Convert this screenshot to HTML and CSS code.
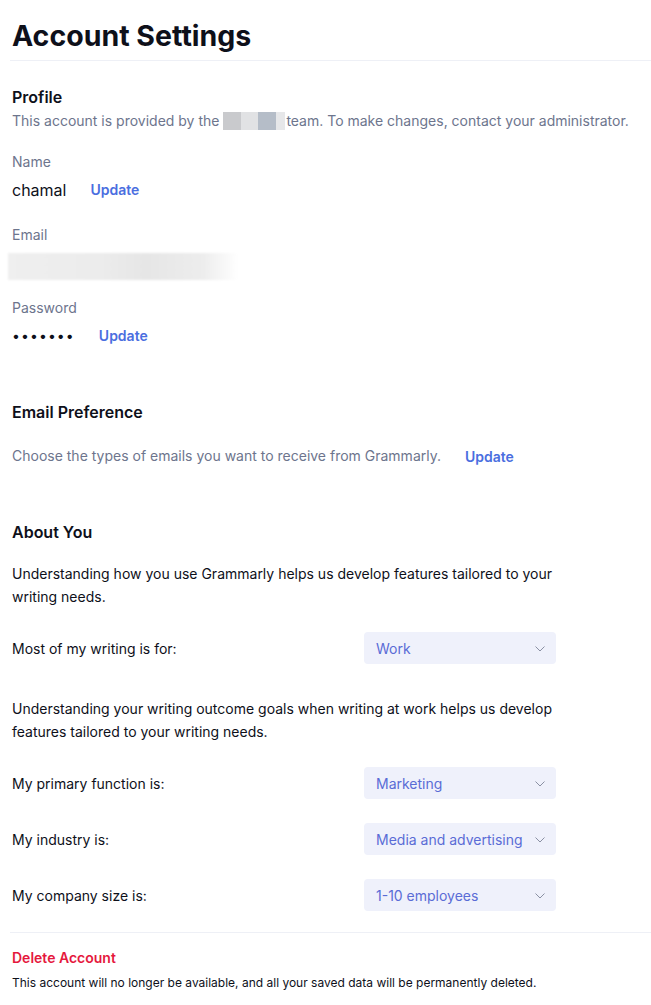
FILE: index.html
```html
<!DOCTYPE html>
<html lang="en">
<head>
  <meta charset="UTF-8">
  <meta name="viewport" content="width=device-width, initial-scale=1.0">
  <title>Account Settings</title>
  <link rel="stylesheet" href="styles.css">
</head>
<body>
  <div class="page">
    <h1 class="page-title">Account Settings</h1>
    <hr class="divider">

    <!-- Profile -->
    <section class="profile">
      <h2 class="section-title">Profile</h2>
      <p class="hint">This account is provided by the <span class="redacted"><i class="r1"></i><i class="r2"></i><i class="r3"></i><i class="r4"></i></span>team. To make changes, contact your administrator.</p>

      <div class="field">
        <div class="field-label">Name</div>
        <div class="field-value">
          <span>chamal</span>
          <a href="#" class="link">Update</a>
        </div>
      </div>

      <div class="field">
        <div class="field-label">Email</div>
        <div class="email-blur"></div>
      </div>

      <div class="field">
        <div class="field-label">Password</div>
        <div class="field-value">
          <span class="dots">•••••••</span>
          <a href="#" class="link">Update</a>
        </div>
      </div>
    </section>

    <!-- Email preference -->
    <section class="pref">
      <h2 class="section-title">Email Preference</h2>
      <div class="pref-row">
        <span class="hint">Choose the types of emails you want to receive from Grammarly.</span>
        <a href="#" class="link">Update</a>
      </div>
    </section>

    <!-- About you -->
    <section class="about">
      <h2 class="section-title">About You</h2>
      <p class="about-text">Understanding how you use Grammarly helps us develop features tailored to your writing needs.</p>

      <div class="select-row first">
        <span>Most of my writing is for:</span>
        <div class="select"><span>Work</span><svg width="10" height="6" viewBox="0 0 10 6"><path d="M0.5 0.5L5 5L9.5 0.5" fill="none" stroke="#8a90a3" stroke-width="1"/></svg></div>
      </div>

      <p class="about-text second">Understanding your writing outcome goals when writing at work helps us develop features tailored to your writing needs.</p>

      <div class="select-row first">
        <span>My primary function is:</span>
        <div class="select"><span>Marketing</span><svg width="10" height="6" viewBox="0 0 10 6"><path d="M0.5 0.5L5 5L9.5 0.5" fill="none" stroke="#8a90a3" stroke-width="1"/></svg></div>
      </div>
      <div class="select-row">
        <span>My industry is:</span>
        <div class="select"><span>Media and advertising</span><svg width="10" height="6" viewBox="0 0 10 6"><path d="M0.5 0.5L5 5L9.5 0.5" fill="none" stroke="#8a90a3" stroke-width="1"/></svg></div>
      </div>
      <div class="select-row">
        <span>My company size is:</span>
        <div class="select"><span>1-10 employees</span><svg width="10" height="6" viewBox="0 0 10 6"><path d="M0.5 0.5L5 5L9.5 0.5" fill="none" stroke="#8a90a3" stroke-width="1"/></svg></div>
      </div>
    </section>

    <hr class="divider bottom">

    <section class="danger">
      <a href="#" class="danger-link">Delete Account</a>
      <p class="danger-text">This account will no longer be available, and all your saved data will be permanently deleted.</p>
    </section>
  </div>
</body>
</html>
```

FILE: styles.css
```css
* {
  margin: 0;
  padding: 0;
  box-sizing: border-box;
}

body {
  font-family: 'Inter', 'Liberation Sans', sans-serif;
  background: #ffffff;
  color: #0e101a;
}

.page {
  padding: 18px 0 0 12px;
}

.page-title {
  font-size: 28.5px;
  line-height: 36px;
  font-weight: 700;
}

.divider {
  border: none;
  border-top: 1px solid #eef0f6;
  margin: 6px 0 0 -2px;
}

.section-title {
  font-size: 16px;
  line-height: 24px;
  font-weight: 600;
}

.hint {
  font-size: 14px;
  line-height: 20px;
  color: #6d758d;
}

.link {
  font-size: 14px;
  font-weight: 600;
  color: #4a6ee0;
  text-decoration: none;
}

/* Profile */
.profile {
  margin-top: 24px;
}

.profile .hint {
  margin-top: 2px;
}

.redacted {
  display: inline-flex;
  vertical-align: -4px;
  height: 18px;
  margin-right: 1px;
}

.redacted i {
  display: block;
  height: 18px;
}

.r1 { width: 18px; background: #c9cacd; }
.r2 { width: 17px; background: #e1e2e4; }
.r3 { width: 18px; background: #b5bdc8; }
.r4 { width: 9px; background: #e6e7e9; }

.field {
  margin-top: 21px;
}

.field + .field {
  margin-top: 23px;
}

.field-label {
  font-size: 14px;
  line-height: 20px;
  color: #6d758d;
}

.field-value {
  margin-top: 6px;
  display: flex;
  align-items: center;
  gap: 24px;
  font-size: 16px;
  line-height: 24px;
}

.dots {
  font-size: 14px;
  letter-spacing: 1.1px;
}

.email-blur {
  width: 230px;
  height: 27px;
  margin: 8px 0 -5px -4px;
  background: linear-gradient(90deg, #efefef 0%, #ececec 40%, #e6e6e6 60%, #ededed 85%, #ffffff 100%);
  filter: blur(1px);
}

/* Email preference */
.pref {
  margin-top: 52px;
}

.pref-row {
  margin-top: 22px;
  display: flex;
  align-items: center;
  gap: 24px;
}

/* About you */
.about {
  margin-top: 54px;
}

.about-text {
  margin-top: 18px;
  max-width: 560px;
  font-size: 14px;
  line-height: 23px;
}

.about-text.second {
  margin-top: 33px;
}

.select-row {
  margin-top: 24px;
  display: grid;
  grid-template-columns: 352px 192px;
  align-items: center;
  font-size: 14px;
}

.select {
  height: 32px;
  padding: 0 11px 0 12px;
  border-radius: 4px;
  background: #eff1fb;
  color: #5a6cd6;
  display: flex;
  align-items: center;
  justify-content: space-between;
  font-size: 14px;
}

.select svg {
  margin-top: 2px;
}

/* Delete account */
.divider.bottom {
  margin-top: 21px;
}

.danger {
  margin-top: 15px;
}

.danger-link {
  display: block;
  font-size: 14px;
  line-height: 20px;
  font-weight: 600;
  color: #e5183d;
  text-decoration: none;
}

.danger-text {
  margin-top: 6px;
  font-size: 12px;
  line-height: 18px;
}
```
